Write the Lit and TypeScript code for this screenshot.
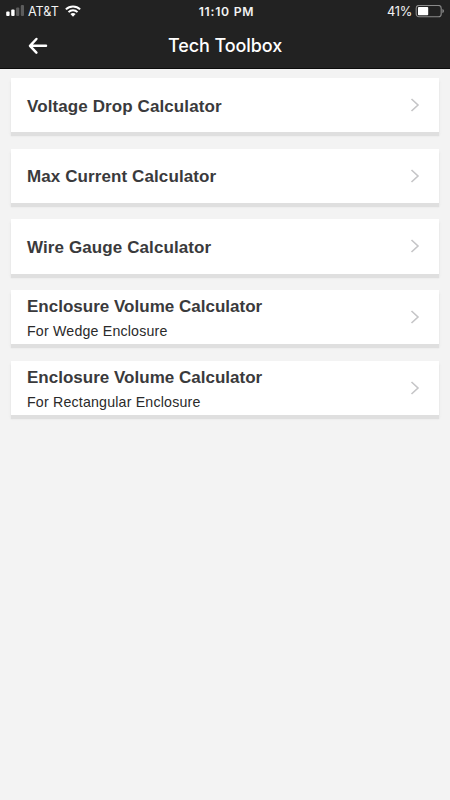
import { LitElement, html, css } from "lit";
import { customElement } from "lit/decorators.js";

@customElement("status-bar")
class StatusBar extends LitElement {
  static styles = css`
    :host {
      display: grid;
      grid-template-columns: 1fr auto 1fr;
      align-items: start;
      height: 22px;
      padding: 0 6px;
      color: #f2f2f2;
      font: 12.5px/24px Inter, "Liberation Sans", sans-serif;
    }
    .side { display: flex; align-items: flex-start; height: 22px; }
    .end { justify-content: flex-end; }
    .carrier { margin: 0 6px 0 3px; font-size: 12.6px; letter-spacing: 0; }
    .time { padding-left: 3px; font-weight: 600; font-size: 12.2px; letter-spacing: 0.75px; }
    .level { margin-right: 3px; font-size: 12.8px; letter-spacing: -0.3px; }
    svg { display: block; margin-top: 5px; }
  `;
  render() {
    return html`
      <div class="side">
        <svg width="19" height="12" viewBox="0 0 19 12">
          <rect x="0.2" y="6.6" width="3.4" height="4.4" rx="1" fill="#fff" />
          <rect x="5.2" y="4.6" width="3.4" height="6.4" rx="1" fill="#fff" />
          <rect x="10.1" y="2.6" width="3.2" height="8.4" rx="1" fill="#5c5c5c" />
          <rect x="14.8" y="0" width="3.2" height="11" rx="1" fill="#5c5c5c" />
        </svg>
        <span class="carrier">AT&amp;T</span>
        <svg width="16" height="12" viewBox="0 0 16 12">
          <g fill="none" stroke="#fff" stroke-width="2">
            <path d="M0.9 4.4C4.8 0.4 11.2 0.4 15.1 4.4" />
            <path d="M3.5 7.1C6 4.7 10 4.7 12.5 7.1" />
          </g>
          <path d="M5.4 9.1C6.9 7.7 9.1 7.7 10.6 9.1L8 11.7Z" fill="#fff" />
        </svg>
      </div>
      <span class="time">11:10 PM</span>
      <div class="side end">
        <span class="level">41%</span>
        <svg width="29" height="13" viewBox="0 0 29 13">
          <rect x="1.2" y="0.4" width="25" height="11.4" rx="2.8" fill="none" stroke="#8a8a8a" stroke-width="1.1" />
          <rect x="3" y="2" width="10.2" height="8.2" rx="0.8" fill="#fff" />
          <path d="M27.4 4Q29 4.6 29 6.1T27.4 8.2Z" fill="#8a8a8a" />
        </svg>
      </div>
    `;
  }
}

@customElement("tool-card")
class ToolCard extends LitElement {
  static properties = { heading: {}, note: {} };
  declare heading: string;
  declare note: string;
  static styles = css`
    :host {
      display: flex;
      align-items: center;
      justify-content: space-between;
      box-sizing: border-box;
      height: 54.2px;
      padding: 0 19px 0 16px;
      background: #fff;
      box-shadow: 0 4px 1px #dfdfdf, 0 3px 3px #e4e4e4;
      font-family: "Liberation Sans", Arial, sans-serif;
    }
    .text { padding-top: 3.4px; white-space: nowrap; }
    .heading { color: #3a3a3c; font-size: 17px; font-weight: 700; line-height: 24px; letter-spacing: 0.1px; }
    .noted { letter-spacing: 0.01px; }
    .note { color: #2a2a2a; font-size: 14.2px; line-height: 24px; letter-spacing: 0.19px; }
    svg { display: block; }
  `;
  render() {
    return html`
      <div class="text">
        <div class="heading ${this.note ? "noted" : ""}">${this.heading}</div>
        ${this.note ? html`<div class="note">${this.note}</div>` : null}
      </div>
      <svg width="10" height="14" viewBox="0 0 10 14">
        <path d="M1.5 1L8 7L1.5 13" fill="none" stroke="#c5c5c7" stroke-width="1.6" />
      </svg>
    `;
  }
}

const tools = [
  ["Voltage Drop Calculator", ""],
  ["Max Current Calculator", ""],
  ["Wire Gauge Calculator", ""],
  ["Enclosure Volume Calculator", "For Wedge Enclosure"],
  ["Enclosure Volume Calculator", "For Rectangular Enclosure"],
];

@customElement("app-root")
class AppRoot extends LitElement {
  static styles = css`
    :host { display: block; height: 800px; background: #f3f3f3; overflow: hidden; }
    header { box-sizing: border-box; height: 69px; background: #222; border-bottom: 1px solid #0c0c0c; }
    .bar {
      display: grid;
      grid-template-columns: 28px 1fr 28px;
      align-items: center;
      height: 47px;
      padding: 0 28px;
    }
    h1 {
      margin: 0;
      color: #fff;
      text-align: center;
      letter-spacing: -0.08px;
      font: 500 18px/47px Inter, "Liberation Sans", sans-serif;
    }
    .list { display: flex; flex-direction: column; gap: 16.5px; padding: 9px 11px; }
    svg { display: block; }
  `;
  render() {
    return html`
      <header>
        <status-bar></status-bar>
        <div class="bar">
          <svg width="20" height="18" viewBox="0 0 20 18">
            <path d="M18 8.8H2.5M8.4 2L2 8.8L8.4 15.6" fill="none" stroke="#fff" stroke-width="2.5" stroke-linecap="round" stroke-linejoin="round" />
          </svg>
          <h1>Tech Toolbox</h1>
        </div>
      </header>
      <div class="list">
        ${tools.map(([heading, note]) => html`<tool-card .heading=${heading} .note=${note}></tool-card>`)}
      </div>
    `;
  }
}
